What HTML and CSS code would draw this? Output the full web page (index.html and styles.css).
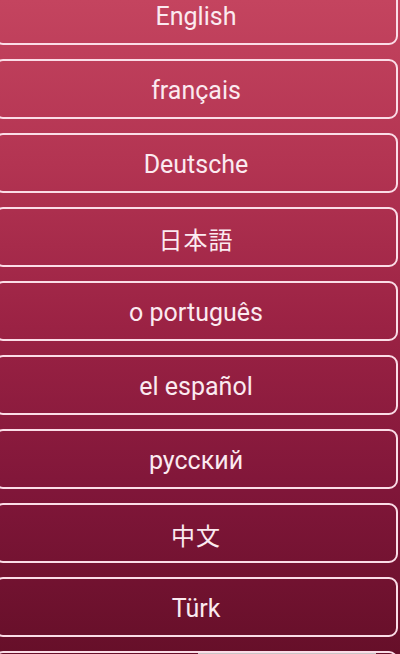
FILE: index.html
```html
<!DOCTYPE html>
<html lang="en">
<head>
<meta charset="utf-8">
<title>Languages</title>
<link rel="stylesheet" href="styles.css">
</head>
<body>
<div class="screen">
  <ul class="langs">
    <li class="lang">English</li>
    <li class="lang">français</li>
    <li class="lang">Deutsche</li>
    <li class="lang cjk">日本語</li>
    <li class="lang">o português</li>
    <li class="lang">el español</li>
    <li class="lang">русский</li>
    <li class="lang cjk">中文</li>
    <li class="lang">Türk</li>
    <li class="lang more"><span class="thumb"></span></li>
  </ul>
</div>
</body>
</html>
```
FILE: styles.css
```css
html, body {
  margin: 0;
  padding: 0;
}
body {
  width: 400px;
  height: 654px;
  overflow: hidden;
  font-family: Roboto, "Noto Sans", "Noto Sans CJK JP", sans-serif;
}
.screen {
  width: 400px;
  height: 654px;
  overflow: hidden;
  background: linear-gradient(180deg, #c4445f 0%, #b33452 25%, #9b2244 50%, #801639 75%, #660f29 100%);
}
.langs {
  list-style: none;
  margin: -15px 0 0 -6px;
  padding: 0;
  width: 404px;
  display: flex;
  flex-direction: column;
  gap: 14px;
}
.lang {
  box-sizing: border-box;
  height: 60px;
  border: 2px solid #fbdde7;
  border-radius: 9px;
  display: flex;
  align-items: center;
  justify-content: center;
  color: #fbeaf0;
  font-size: 25px;
  padding-top: 2px;
}
.cjk {
  font-family: "Noto Sans CJK JP", "Noto Sans", sans-serif;
  font-size: 24px;
  letter-spacing: 1px;
}
.more {
  align-items: flex-start;
  justify-content: flex-end;
  padding-top: 0;
}
.thumb {
  width: 178px;
  height: 20px;
  margin-right: 20px;
  background: #c9c5c6;
}
```
